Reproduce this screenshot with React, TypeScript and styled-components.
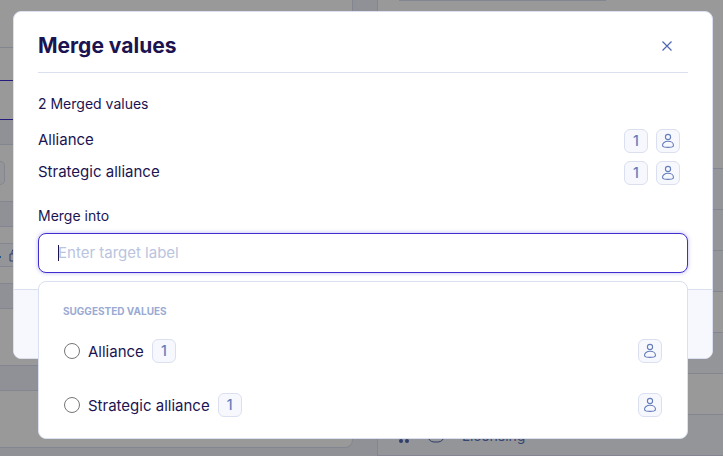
import React from "react";
import styled, { createGlobalStyle } from "styled-components";

const Global = createGlobalStyle`
  *, *::before, *::after { box-sizing: border-box; }
  html, body, #root { height: 100%; }
  body { margin: 0; overflow: hidden; background: #f0f2fb; color: #1b1450; }
  body, input, button { font-family: "Inter", "Liberation Sans", sans-serif; }
  h2, p, ul { margin: 0; padding: 0; }
  ul { list-style: none; }
`;

const line = "#dbe0f0";

const Page = styled.div`
  display: grid;
  grid-template-columns: minmax(0, 353fr) minmax(0, 346fr);
  gap: 24px;
  height: 100%;
  overflow: hidden;
`;

const Column = styled.div`
  display: flex;
  flex-direction: column;
  gap: 24px;
  background: #f0f2fb;
  border-right: 0;
`;

const Card = styled.section<{ $height: number }>`
  flex: 0 0 ${(p) => p.$height}px;
  background: #fff;
  border: 1px solid ${line};
  border-left: 0;
  border-radius: 0 8px 8px 0;
`;

const SearchCard = styled(Card)`
  padding-top: 80px;
  border-top: 0;
  border-bottom: 0;
  border-radius: 0 0 8px 0;
  background: linear-gradient(#fff 47px, ${line} 47px, ${line} 48px, #fff 48px);
`;

const SearchBand = styled.div`
  height: 40px;
  border: solid #3f2fd0;
  border-width: 1px 0;
`;

const CardAction = styled.div`
  width: 5px;
  height: 24px;
  margin-top: 16px;
  background: #f7f8fd;
  border: 1px solid ${line};
  border-left: 0;
  border-radius: 0 6px 6px 0;
`;

const MetaRow = styled.div`
  display: flex;
  align-items: center;
  gap: 8px;
  height: 24px;
  margin-top: 16px;
  background: #f7f8fd;
  border: solid ${line};
  border-width: 1px 0;
`;

const Dot = styled.span`
  width: 1px;
  height: 2px;
  margin-top: 4px;
  background: #3b8fe0;
`;

const Panel = styled.div`
  display: flex;
  flex-direction: column;
  background: #fff;
  border-left: 1px solid ${line};
`;

const PanelTop = styled.div`
  flex: 0 0 168px;
  padding: 0 34% 0 21px;
`;

const PanelField = styled.div`
  height: 1px;
  background: ${line};
`;

const PanelRow = styled.div<{ $tint?: boolean }>`
  display: flex;
  flex: 0 0 41px;
  align-items: center;
  gap: 17px;
  padding-left: 20px;
  border-top: 1px solid ${line};
  background: ${(p) => (p.$tint ? "#f7f8fd" : "#fff")};
  font-size: 14px;
  color: #5b76bd;
`;

const Overlay = styled.div`
  position: fixed;
  inset: 0;
  padding: 11px 10px 0 13px;
  background: rgba(0, 0, 0, 0.4);
`;

const Dialog = styled.div`
  background: #fff;
  border: 1px solid ${line};
  border-radius: 8px;
`;

const Content = styled.div`
  padding: 0 24px 16px;
`;

const Header = styled.header`
  display: flex;
  align-items: center;
  justify-content: space-between;
  height: 61px;
  padding: 8px 12px 0 0;
  border-bottom: 1px solid ${line};
`;

const Title = styled.h2`
  font-size: 21px;
  line-height: 28px;
  font-weight: 700;
`;

const CloseButton = styled.button`
  display: flex;
  padding: 0;
  border: 0;
  background: none;
  color: #4f66b3;
`;

const Subtitle = styled.p`
  margin: 20px 0 8px;
  padding-bottom: 2px;
  font-size: 14px;
  line-height: 22px;
`;

const ValueRow = styled.li`
  display: flex;
  align-items: center;
  gap: 8px;
  height: 32px;
  padding-right: 8px;
  font-size: 15px;
`;

const Name = styled.span`
  flex: 1;
  padding-bottom: 2px;
  line-height: 22px;
`;

const Badge = styled.span`
  display: flex;
  align-items: center;
  justify-content: center;
  width: 24px;
  height: 24px;
  background: #f7f8fd;
  border: 1px solid ${line};
  border-radius: 6px;
  color: #647dba;
`;

const CountBadge = styled(Badge)`
  padding-bottom: 2px;
  font-size: 14px;
  font-weight: 500;
`;

const Field = styled.div`
  position: relative;
  margin-top: 16px;
`;

const FieldLabel = styled.label`
  display: block;
  margin-bottom: 4px;
  padding-bottom: 2px;
  font-size: 14px;
  line-height: 22px;
`;

const InputWrap = styled.div`
  position: relative;
`;

const Caret = styled.span`
  position: absolute;
  top: 12px;
  left: 20px;
  width: 1px;
  height: 16px;
  background: #1b1450;
`;

const TextInput = styled.input`
  display: block;
  width: 100%;
  height: 40px;
  padding: 0 19px 1px;
  border: 1px solid #3f2fd0;
  border-radius: 8px;
  outline: 0;
  background: #fff;
  box-shadow: 0 0 4px rgba(63, 47, 208, 0.35);
  color: #1b1450;
  caret-color: transparent;
  font-size: 15px;
  &::placeholder { color: #bac4e0; opacity: 1; }
`;

const Menu = styled.div`
  position: absolute;
  top: calc(100% + 8px);
  left: 0;
  right: 0;
  padding: 16px 25px 6px 24px;
  background: #fff;
  border: 1px solid ${line};
  border-radius: 8px;
`;

const MenuTitle = styled.p`
  font-size: 10px;
  line-height: 26px;
  font-weight: 700;
  color: #9aaad3;
`;

const Option = styled.li`
  display: flex;
  align-items: center;
  justify-content: space-between;
  height: 54px;
`;

const OptionLabel = styled.label`
  display: flex;
  align-items: center;
  gap: 8px;
  font-size: 15px;
`;

const Radio = styled.input`
  width: 16px;
  height: 16px;
  margin: 0 0 0 1px;
`;

const Footer = styled.footer`
  height: 69px;
  background: #f7f8fd;
  border-top: 1px solid ${line};
  border-radius: 0 0 8px 8px;
`;

const PersonIcon = () => (
  <svg width="14" height="16" viewBox="0 0 14 16" fill="none" stroke="currentColor" strokeWidth="1.1" aria-hidden="true">
    <circle cx="7" cy="4" r="2.6" />
    <path d="M7 8.300c3.200 0 5.500 1.800 5.500 4 0 1-.7 1.500-1.700 1.700-2.300.4-5.300.4-7.600 0-1-.2-1.700-.7-1.700-1.700C1.500 10.100 3.800 8.300 7 8.300Z" />
  </svg>
);

const PersonBadge = () => (
  <Badge>
    <PersonIcon />
  </Badge>
);

const values = [
  { name: "Alliance", count: 1 },
  { name: "Strategic alliance", count: 1 },
];

export default function App() {
  return (
    <>
      <Global />
      <Page aria-hidden="true">
        <Column>
          <SearchCard $height={120}><SearchBand /></SearchCard>
          <Card $height={58}><CardAction /></Card>
          <Card $height={58}>
            <MetaRow>
              <Dot />
              <svg width="12" height="14" viewBox="0 0 12 14" fill="none" stroke="#4f66b3">
                <path d="M1 6h10v7H1zM3 6V4a3 3 0 0 1 6 0v2" />
              </svg>
            </MetaRow>
          </Card>
          <Card $height={58} />
          <Card $height={58} />
        </Column>
        <Panel>
          <PanelTop><PanelField /></PanelTop>
          <PanelRow $tint />
          <PanelRow $tint />
          <PanelRow $tint />
          <PanelRow />
          <PanelRow $tint />
          <PanelRow />
          <PanelRow $tint>
            <svg width="12" height="20" viewBox="0 0 12 20" fill="#4f66b3">
              <circle cx="3" cy="10" r="2" /><circle cx="9" cy="10" r="2" />
              <circle cx="3" cy="16" r="2" /><circle cx="9" cy="16" r="2" />
            </svg>
            <svg width="18" height="16" viewBox="0 0 18 16" fill="none" stroke="#4f66b3">
              <rect x="1" y="1" width="16" height="14" rx="6" />
            </svg>
            <span>Licensing</span>
          </PanelRow>
          <PanelRow />
        </Panel>
      </Page>
      <Overlay>
        <Dialog role="dialog" aria-modal="true" aria-labelledby="merge-title">
          <Content>
            <Header>
              <Title id="merge-title">Merge values</Title>
              <CloseButton type="button" aria-label="Close">
                <svg width="18" height="18" viewBox="0 0 18 18" stroke="currentColor" strokeWidth="1.2">
                  <path d="M4.500 4.500l9 9M13.500 4.500l-9 9" />
                </svg>
              </CloseButton>
            </Header>
            <Subtitle>2 Merged values</Subtitle>
            <ul>
              {values.map((v) => (
                <ValueRow key={v.name}>
                  <Name>{v.name}</Name>
                  <CountBadge>{v.count}</CountBadge>
                  <PersonBadge />
                </ValueRow>
              ))}
            </ul>
            <Field>
              <FieldLabel htmlFor="target">Merge into</FieldLabel>
              <InputWrap>
                <TextInput id="target" type="text" placeholder="Enter target label" autoComplete="off" autoFocus />
                <Caret />
              </InputWrap>
              <Menu>
                <MenuTitle>SUGGESTED VALUES</MenuTitle>
                <ul>
                  {values.map((v) => (
                    <Option key={v.name}>
                      <OptionLabel>
                        <Radio type="radio" name="suggestion" value={v.name} />
                        {v.name}
                        <CountBadge>{v.count}</CountBadge>
                      </OptionLabel>
                      <PersonBadge />
                    </Option>
                  ))}
                </ul>
              </Menu>
            </Field>
          </Content>
          <Footer />
        </Dialog>
      </Overlay>
    </>
  );
}
